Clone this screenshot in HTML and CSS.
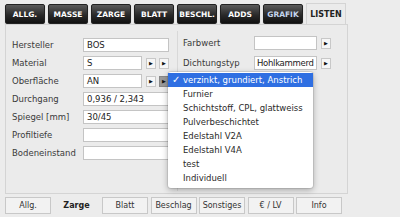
FILE: index.html
```html
<!DOCTYPE html>
<html lang="de">
<head>
  <meta charset="UTF-8" />
  <title>Listen - Zarge</title>
  <link rel="stylesheet" href="styles.css">
</head>
<body>
  <div class="window">
    <div class="top-tabs">
      <button class="dark-tab">ALLG.</button>
      <button class="dark-tab">MASSE</button>
      <button class="dark-tab">ZARGE</button>
      <button class="dark-tab">BLATT</button>
      <button class="dark-tab">BESCHL.</button>
      <button class="dark-tab">ADDS</button>
      <button class="dark-tab grafik">GRAFIK</button>
      <button class="dark-tab active">LISTEN</button>
    </div>

    <div class="panel">
      <div class="col-left">
        <div class="row">
          <label>Hersteller</label>
          <div class="field wide">BOS</div>
        </div>
        <div class="row">
          <label>Material</label>
          <div class="field short">S</div>
          <span class="arrow">&#9654;</span>
          <span class="arrow">&#9654;</span>
        </div>
        <div class="row">
          <label>Oberfläche</label>
          <div class="field short">AN</div>
          <span class="arrow">&#9654;</span>
          <span class="arrow pressed">&#9654;</span>
        </div>
        <div class="row">
          <label>Durchgang</label>
          <div class="field wide">0,936 / 2,343</div>
        </div>
        <div class="row">
          <label>Spiegel [mm]</label>
          <div class="field wide">30/45</div>
        </div>
        <div class="row">
          <label>Profiltiefe</label>
          <div class="field wide"></div>
        </div>
        <div class="row">
          <label>Bodeneinstand</label>
          <div class="field wide"></div>
        </div>
      </div>

      <div class="col-right">
        <div class="row">
          <label>Farbwert</label>
          <div class="field mid"></div>
          <span class="arrow">&#9654;</span>
        </div>
        <div class="row">
          <label>Dichtungstyp</label>
          <div class="field mid">Hohlkammerd</div>
          <span class="arrow">&#9654;</span>
        </div>
      </div>

      <ul class="popup">
        <li class="checked"><span class="check">✓</span>verzinkt, grundiert, Anstrich</li>
        <li>Furnier</li>
        <li>Schichtstoff, CPL, glattweiss</li>
        <li>Pulverbeschichtet</li>
        <li>Edelstahl V2A</li>
        <li>Edelstahl V4A</li>
        <li>test</li>
        <li>Individuell</li>
      </ul>
    </div>

    <div class="bottom-tabs">
      <button class="light-tab">Allg.</button>
      <button class="light-tab active">Zarge</button>
      <button class="light-tab">Blatt</button>
      <button class="light-tab">Beschlag</button>
      <button class="light-tab">Sonstiges</button>
      <button class="light-tab">€ / LV</button>
      <button class="light-tab">Info</button>
    </div>
  </div>
</body>
</html>
```

FILE: styles.css
```css
body {
  margin: 0;
  background: #ececec;
  font-family: "DejaVu Sans", "Liberation Sans", sans-serif;
  color: #333;
}

.window {
  width: 343px;
  padding: 3px 0 0 5px;
}

.top-tabs {
  display: flex;
  gap: 3px;
  height: 21px;
}

.dark-tab {
  width: 40px;
  height: 20px;
  margin: 1px 0 0 0;
  padding: 0;
  border: 1px solid #222;
  border-radius: 2px;
  background: linear-gradient(#5a5a5a, #2a2a2a 55%, #111);
  color: #fff;
  font-family: inherit;
  font-size: 7.5px;
  font-weight: bold;
  box-shadow: 0 1px 1px rgba(0, 0, 0, 0.3);
}

.dark-tab.grafik {
  color: #c6d6ee;
}

.dark-tab.active {
  height: 21px;
  margin-top: 0;
  border: 1px solid #d4d4d4;
  border-bottom: none;
  border-radius: 0;
  background: #ebebeb;
  color: #222;
  font-size: 8px;
  box-shadow: none;
  position: relative;
  z-index: 1;
}

.panel {
  position: relative;
  display: flex;
  height: 168px;
  border: 1px solid #d4d4d4;
  background: #ebebeb;
}

.col-left {
  width: 165px;
  padding: 7px 0 0 6px;
  border-right: 1px solid #d8d8d8;
  margin: 6px 0 2px 0;
}

.col-right {
  padding: 11px 0 0 5px;
}

.row {
  display: flex;
  align-items: center;
  height: 14px;
  margin-bottom: 4px;
}

.col-right .row {
  margin-bottom: 6px;
}

label {
  width: 71px;
  font-size: 8.5px;
  color: #3a3a3a;
}

.field {
  height: 12px;
  line-height: 12px;
  padding: 0 3px;
  border: 1px solid #c4c4c4;
  background: #fff;
  font-size: 8.5px;
  color: #222;
  box-sizing: content-box;
}

.field.wide {
  width: 78px;
}

.field.short {
  width: 51px;
  margin-right: 4px;
}

.field.mid {
  width: 58px;
  padding: 0 1px 0 2px;
  margin-right: 4px;
  white-space: nowrap;
  letter-spacing: -0.3px;
}

.arrow {
  width: 8px;
  height: 9px;
  margin-right: 3px;
  border: 1px solid #c8c8c8;
  background: #f6f6f6;
  font-size: 5px;
  line-height: 9px;
  text-align: center;
  color: #111;
}

.arrow.pressed {
  background: #9a9a9a;
  border-color: #888;
}

.popup {
  position: absolute;
  left: 162px;
  top: 47px;
  width: 145px;
  margin: 0;
  padding: 1px 0 3px 0;
  list-style: none;
  background: #fff;
  border-radius: 3px;
  box-shadow: 0 2px 6px rgba(0, 0, 0, 0.3), 0 0 0 1px rgba(0, 0, 0, 0.08);
  z-index: 5;
}

.popup li {
  height: 14px;
  line-height: 14px;
  padding-left: 15px;
  font-size: 8.5px;
  color: #2a2a2a;
  position: relative;
}

.popup li.checked {
  background: #2f6fe2;
  color: #fff;
}

.popup .check {
  position: absolute;
  left: 4px;
  font-size: 10px;
}

.bottom-tabs {
  display: flex;
  gap: 2.5px;
  margin-top: 3px;
}

.light-tab {
  width: 46px;
  height: 17px;
  padding: 0;
  border: 1px solid #c8c8c8;
  background: #f2f2f2;
  font-family: inherit;
  font-size: 8px;
  color: #333;
}

.light-tab.active {
  border-color: transparent;
  background: transparent;
  font-weight: bold;
  color: #222;
}
```
